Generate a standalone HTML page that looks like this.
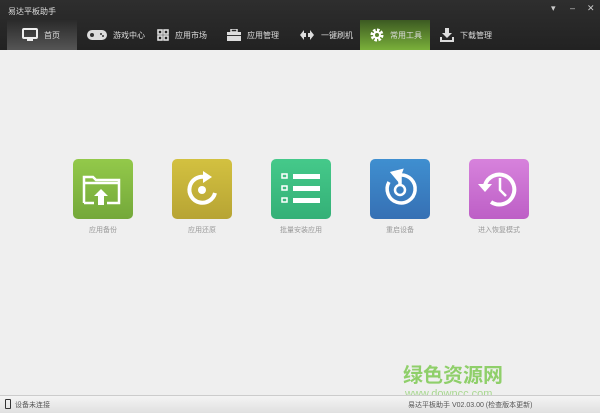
<!DOCTYPE html>
<html><head><meta charset="utf-8"><style>
*{margin:0;padding:0;box-sizing:border-box}
body{width:600px;height:413px;overflow:hidden;background:#efefef;font-family:"Liberation Sans","Noto Sans CJK SC",sans-serif;position:relative}
#top{position:absolute;left:0;top:0;width:600px;height:50px;background:linear-gradient(#2e2e2e,#222)}
.title{position:absolute;left:8px;top:6px;font-size:8px;color:#ddd}
.tab{position:absolute;top:20px;height:30px;color:#ddd;font-size:8px;display:flex;align-items:center}
.tab svg{margin-right:6px}
.sel1{background:linear-gradient(#2a2a2a,#555);}
.sel2{background:linear-gradient(#3c5a22,#7ab03a);}
.ctl{position:absolute;top:3px;color:#ccc;font-size:9px}
.tile{position:absolute;top:159px;width:60px;height:60px;border-radius:5px}
.lbl{position:absolute;top:225px;width:100px;text-align:center;font-size:7px;color:#999}
#status{position:absolute;left:0;top:395px;width:600px;height:18px;background:linear-gradient(#f4f4f4,#e0e0e0);border-top:1px solid #ccc;font-size:7px;color:#555}
</style></head><body>
<div id="top">
<div class="title">易达平板助手</div>
<div class="ctl" style="left:551px">▾</div><div class="ctl" style="left:570px">–</div><div class="ctl" style="left:587px">✕</div>
<div class="tab sel1" style="left:7px;width:70px;padding-left:15px"><svg width="16" height="14" viewBox="0 0 16 14"><rect x="1" y="1" width="14" height="9" rx="1" fill="none" stroke="#eee" stroke-width="2"/><rect x="5" y="11" width="6" height="2" fill="#eee"/></svg>首页</div>
<div class="tab" style="left:87px"><svg width="20" height="12" viewBox="0 0 20 12"><rect x="0" y="1" width="20" height="10" rx="5" fill="#ddd"/><circle cx="5" cy="6" r="2" fill="#333"/><circle cx="14" cy="5" r="1" fill="#333"/><circle cx="16" cy="7" r="1" fill="#333"/></svg>游戏中心</div>
<div class="tab" style="left:157px"><svg width="12" height="12" viewBox="0 0 12 12" fill="none" stroke="#ddd" stroke-width="1.6"><rect x="1" y="1" width="4" height="4"/><rect x="7" y="1" width="4" height="4"/><rect x="1" y="7" width="4" height="4"/><rect x="7" y="7" width="4" height="4"/></svg>应用市场</div>
<div class="tab" style="left:227px"><svg width="14" height="12" viewBox="0 0 14 12"><rect x="0" y="3" width="14" height="9" fill="#ddd"/><rect x="4" y="0" width="6" height="3" fill="none" stroke="#ddd" stroke-width="1.5"/><rect x="0" y="6" width="14" height="1" fill="#333"/></svg>应用管理</div>
<div class="tab" style="left:299px"><svg width="16" height="12" viewBox="0 0 16 12" fill="#ddd"><path d="M1 6l4-5v3h2v4H5v3z M15 6l-4 5V8H9V4h2V1z"/></svg>一键刷机</div>
<div class="tab sel2" style="left:360px;width:70px;padding-left:10px"><svg width="14" height="14" viewBox="0 0 14 14"><circle cx="7" cy="7" r="5" fill="none" stroke="#fff" stroke-width="3" stroke-dasharray="2.5 1.4"/><circle cx="7" cy="7" r="3" fill="none" stroke="#fff" stroke-width="2"/></svg>常用工具</div>
<div class="tab" style="left:440px"><svg width="14" height="14" viewBox="0 0 14 14" fill="#ddd"><path d="M5 0h4v5h3l-5 5-5-5h3z M0 9h2v3h10V9h2v5H0z"/></svg>下载管理</div>
</div>

<div class="tile" style="left:73px;background:linear-gradient(#93c94a,#74a83a)"><svg width="60" height="60" viewBox="0 0 60 60" fill="none" stroke="#fff" stroke-width="2.5"><path d="M11 44V18h9l3 3h23v8M11 24h35v20H34M11 44h10"/><path d="M28 30l-7 7h4v9h6v-9h4z" fill="#fff" stroke="none"/></svg></div>
<div class="tile" style="left:172px;background:linear-gradient(#d3c140,#b7a434)"><svg width="60" height="60" viewBox="0 0 60 60" fill="none" stroke="#fff" stroke-width="4"><path d="M43 34A13 13 0 1 1 33 18"/><path d="M31 12l9 6-9 6z" fill="#fff" stroke="none"/><circle cx="30" cy="31" r="4" fill="#fff" stroke="none"/></svg></div>
<div class="tile" style="left:271px;background:linear-gradient(#45c98a,#34b077)"><svg width="60" height="60" viewBox="0 0 60 60" fill="#fff"><rect x="22" y="15" width="27" height="5"/><rect x="22" y="27" width="27" height="5"/><rect x="22" y="39" width="27" height="5"/><g fill="none" stroke="#fff" stroke-width="1.5"><rect x="11" y="15" width="5" height="4"/><rect x="11" y="27" width="5" height="4"/><rect x="11" y="39" width="5" height="4"/></g></svg></div>
<div class="tile" style="left:370px;background:linear-gradient(#3f8fd0,#3670b4)"><svg width="60" height="60" viewBox="0 0 60 60" fill="none" stroke="#fff" stroke-width="3.5"><path d="M19 23A14 14 0 1 0 30 16"/><path d="M23 14l8 -2-3 8z" fill="#fff"/><circle cx="30" cy="31" r="5" stroke-width="2.5"/><line x1="30" y1="16" x2="30" y2="26"/></svg></div>
<div class="tile" style="left:469px;background:linear-gradient(#d782dc,#bd5fc6)"><svg width="60" height="60" viewBox="0 0 60 60" fill="none" stroke="#fff" stroke-width="4"><path d="M16 26A15 15 0 1 1 22 43"/><path d="M9 25h14l-7 8z" fill="#fff" stroke="none"/><path d="M31 19v12l6 6" stroke-width="2.5"/></svg></div>

<div class="lbl" style="left:53px">应用备份</div>
<div class="lbl" style="left:152px">应用还原</div>
<div class="lbl" style="left:251px">批量安装应用</div>
<div class="lbl" style="left:350px">重启设备</div>
<div class="lbl" style="left:449px">进入恢复模式</div>

<div style="position:absolute;left:403px;top:364px;font-size:20px;line-height:24px;font-weight:bold;color:#8fcf6a">绿色资源网</div>
<div style="position:absolute;left:405px;top:388px;font-size:11px;line-height:12px;color:#a8d890">www.downcc.com</div>
<div id="status"><span style="position:absolute;left:5px;top:3px;width:6px;height:10px;border:1.5px solid #333;border-radius:1px"></span><span style="position:absolute;left:15px;top:4px">设备未连接</span><span style="position:absolute;left:408px;top:4px">易达平板助手 V02.03.00 (检查版本更新)</span></div>
</body></html>
